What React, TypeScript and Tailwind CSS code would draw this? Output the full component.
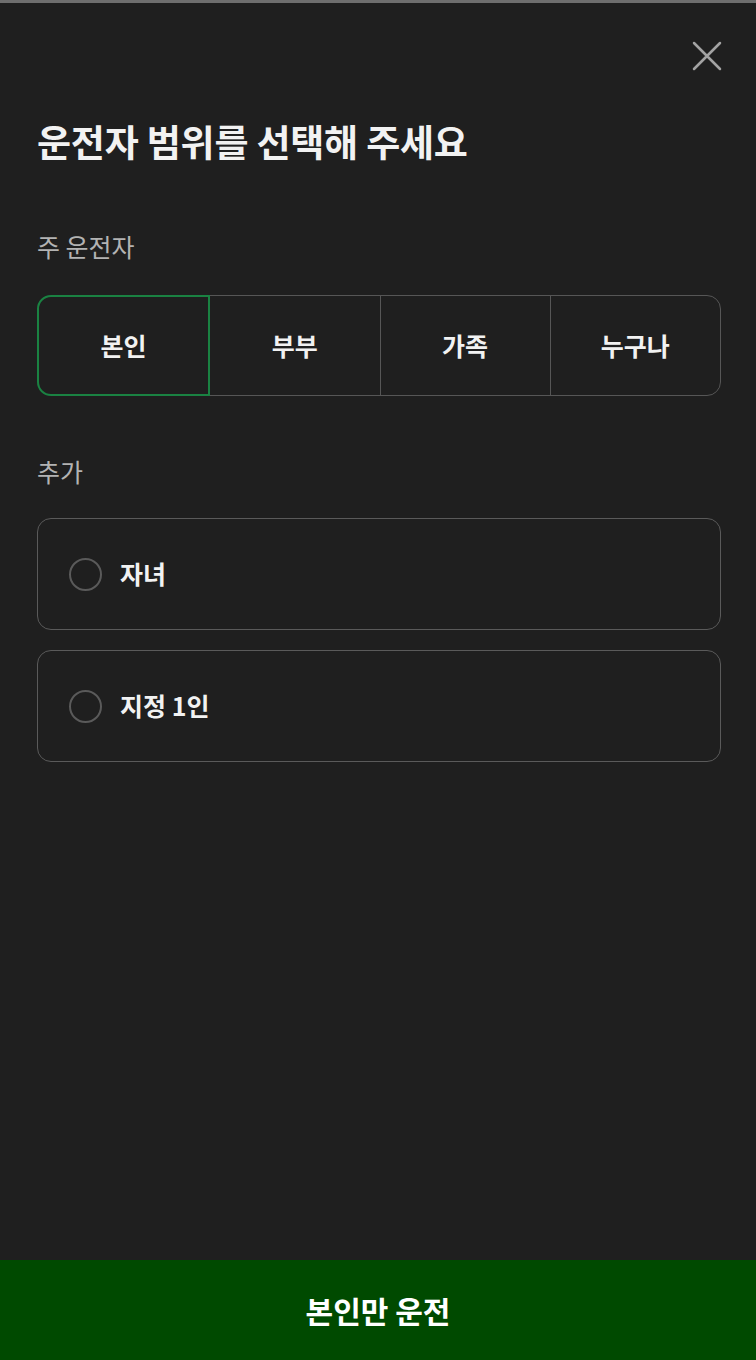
import React, { useState } from 'react';

const font = { fontFamily: '"Noto Sans CJK KR", "Noto Sans", sans-serif' };

const MAIN = ['본인', '부부', '가족', '누구나'];
const EXTRA = ['자녀', '지정 1인'];

const App = () => {
  const [main, setMain] = useState(0);
  const [extra, setExtra] = useState<string[]>([]);

  const toggle = (v: string) =>
    setExtra((prev) => (prev.includes(v) ? prev.filter((x) => x !== v) : [...prev, v]));

  return (
    <div style={font} className="flex h-[1360px] w-full flex-col bg-[#1f1f1f] text-white">
      <div className="h-[3px] bg-[#6e6e6e]" />

      <div className="flex-1 pl-[37px] pr-[35px]">
        {/* Close */}
        <div className="flex justify-end pt-[38px]">
          <button className="-mr-[1px] p-0" aria-label="닫기">
            <svg width="30" height="30" viewBox="0 0 30 30" fill="none" stroke="#a3a3a3" strokeWidth="2.5" strokeLinecap="round">
              <path d="M2 2 L28 28 M28 2 L2 28" />
            </svg>
          </button>
        </div>

        <h1 className="mt-[46px] text-[37px] font-bold leading-[48px] tracking-[-0.2px] text-[#f2f2f2]">
          운전자 범위를 선택해 주세요
        </h1>

        <p className="mt-[64px] text-[25px] leading-[34px] text-[#b3b3b3]">주 운전자</p>

        <div className="mt-[32px] flex">
          {MAIN.map((m, i) => {
            const selected = main === i;
            return (
              <button
                key={m}
                onClick={() => setMain(i)}
                className={`relative h-[101px] flex-1 text-[25px] font-bold text-[#f2f2f2] ${
                  i > 0 ? '-ml-px' : ''
                } ${i === 0 ? 'rounded-l-[14px]' : ''} ${i === MAIN.length - 1 ? 'rounded-r-[14px]' : ''} ${
                  selected ? 'z-10 border-2 border-[#1a8242]' : 'border border-[#565656]'
                }`}
              >
                {m}
              </button>
            );
          })}
        </div>

        <p className="mt-[58px] text-[25px] leading-[34px] text-[#b3b3b3]">추가</p>

        <div className="mt-[30px] flex flex-col gap-[20px]">
          {EXTRA.map((e) => {
            const on = extra.includes(e);
            return (
              <button
                key={e}
                onClick={() => toggle(e)}
                className="flex h-[112px] items-center gap-[18px] rounded-[14px] border border-[#5a5a5a] px-[31px] text-left"
              >
                <span
                  className={`flex h-[33px] w-[33px] items-center justify-center rounded-full border-2 ${
                    on ? 'border-[#1a8242]' : 'border-[#5a5a5a]'
                  }`}
                >
                  {on && <span className="h-[15px] w-[15px] rounded-full bg-[#1a8242]" />}
                </span>
                <span className="text-[25px] font-bold text-[#f2f2f2]">{e}</span>
              </button>
            );
          })}
        </div>
      </div>

      <button className="h-[100px] w-full bg-[#004a00] text-[30px] font-bold text-white">
        {MAIN[main]}
        {main === 0 ? '만 운전' : ' 운전'}
      </button>
    </div>
  );
};

export default App;
